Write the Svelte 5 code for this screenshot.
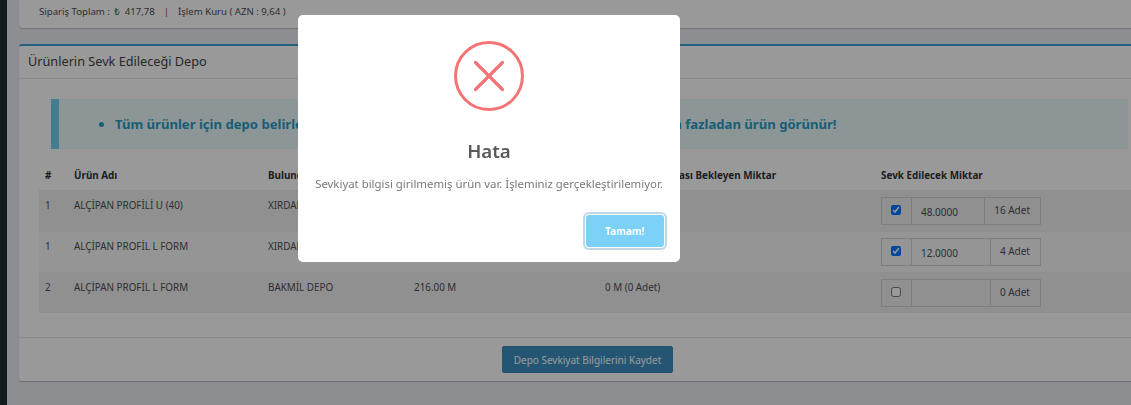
<script>
  const rows = [
    { no: 1, name: 'ALÇİPAN PROFİLİ U (40)', depot: 'XIRDALAN DEPO', stock: '', wait: '', on: true, val: '48.0000', unit: '16 Adet', wide: false },
    { no: 1, name: 'ALÇİPAN PROFİL L FORM', depot: 'XIRDALAN DEPO', stock: '', wait: '', on: true, val: '12.0000', unit: '4 Adet', wide: true },
    { no: 2, name: 'ALÇİPAN PROFİL L FORM', depot: 'BAKMİL DEPO', stock: '216.00 M', wait: '0 M (0 Adet)', on: false, val: '', unit: '0 Adet', wide: true }
  ];
</script>

<div class="page">
  <aside class="side"></aside>
  <main class="main">
    <section class="summary">
      <span>Sipariş Toplam : <span class="cur">₺</span> <span class="amt">417,78</span></span>
      <span class="sep">|</span>
      <span>İşlem Kuru ( AZN : 9,64 )</span>
    </section>

    <section class="card">
      <h2 class="card-title">Ürünlerin Sevk Edileceği Depo</h2>
      <div class="card-body">
        <div class="alert">
          <ul>
            <li>Tüm ürünler için depo belirleyiniz. Birden fazla depoda stok olması durumunda tabloda fazladan ürün görünür!</li>
          </ul>
        </div>
        <table>
          <colgroup>
            <col class="c1" /><col class="c2" /><col class="c3" /><col class="c4" /><col class="c5" /><col class="c6" />
          </colgroup>
          <thead>
            <tr>
              <th>#</th>
              <th>Ürün Adı</th>
              <th>Bulunduğu Depo</th>
              <th>Depo Miktarı</th>
              <th>Sevkiyat Onaması Bekleyen Miktar</th>
              <th>Sevk Edilecek Miktar</th>
            </tr>
          </thead>
          <tbody>
            {#each rows as r}
              <tr>
                <td>{r.no}</td>
                <td>{r.name}</td>
                <td>{r.depot}</td>
                <td>{r.stock}</td>
                <td>{r.wait}</td>
                <td class="qty">
                  <div class="group">
                    <span class="chk"><input type="checkbox" checked={r.on} /></span>
                    <input class="val" type="text" value={r.val} />
                    <span class="unit" class:long={!r.wide}>{r.unit}</span>
                  </div>
                </td>
              </tr>
            {/each}
          </tbody>
        </table>
      </div>
      <footer class="card-foot">
        <button class="save" type="button">Depo Sevkiyat Bilgilerini Kaydet</button>
      </footer>
    </section>
  </main>
</div>

<div class="overlay">
  <div class="modal" role="dialog">
    <svg class="icon" viewBox="0 0 70 70" width="70" height="70" aria-hidden="true">
      <circle cx="35" cy="35" r="33.5" fill="none" stroke="#f27474" stroke-width="3" />
      <path d="M21.5 21.5 L48.5 48.5 M48.5 21.5 L21.5 48.5" fill="none" stroke="#f27474" stroke-width="3.2" stroke-linecap="round" />
    </svg>
    <h3>Hata</h3>
    <p>Sevkiyat bilgisi girilmemiş ürün var. İşleminiz gerçekleştirilemiyor.</p>
    <div class="actions"><button type="button">Tamam!</button></div>
  </div>
</div>

<style>
  :global(body) {
    margin: 0;
    background: #ecedf4;
    font-family: "Noto Sans", "Liberation Sans", sans-serif;
    font-size: 10px;
    color: #4b5563;
    overflow: hidden;
  }
  .page { display: flex; height: 405px; width: 1131px; overflow: hidden; }
  .side { flex: 0 0 7px; background: #1b2f35; }
  .main { flex: 0 0 1149px; padding-left: 12px; box-sizing: border-box; }
  .summary {
    height: 28px;
    box-sizing: border-box;
    padding: 5px 20px 0;
    background: #fff;
    border-radius: 0 0 4px 4px;
    box-shadow: 0 1px 1px rgba(0,0,0,.2);
    color: #4a4f5a;
    font-size: 9.6px;
    display: flex;
    gap: 9px;
  }
  .cur { margin-left: 2px; }
  .amt { margin-left: 2.4px; }
  .sep { color: #b03a48; }
  .card {
    margin-top: 16px;
    background: #fff;
    border-top: 2px solid #3b9fd3;
    border-radius: 3px;
    box-shadow: 0 1px 1px rgba(0,0,0,.25);
  }
  .card-title {
    margin: 0;
    padding: 0 9px;
    height: 32px;
    line-height: 30px;
    font-size: 12.7px;
    font-weight: 400;
    color: #444;
    border-bottom: 1px solid #e6e6e6;
  }
  .card-body { padding: 20px 0 24px 20px; border-bottom: 1px solid #e6e6e6; }
  .alert {
    margin: 0 28px 0 12px;
    height: 50px;
    background: #eafafa;
    border-left: 8px solid #6fd0ee;
    color: #2a9cc6;
    font-size: 13.1px;
    font-weight: 700;
    display: flex;
    align-items: center;
  }
  .alert ul { margin: 0; padding-left: 56px; }
  table { width: 100%; border-collapse: collapse; table-layout: fixed; }
  .c1 { width: 29px; } .c2 { width: 194px; } .c3 { width: 146px; }
  .c4 { width: 191px; } .c5 { width: 276px; }
  th {
    height: 41px;
    box-sizing: border-box;
    padding: 0 6px 10px;
    vertical-align: bottom;
    text-align: left;
    font-size: 9.9px;
    line-height: 10px;
    font-weight: 700;
    color: #333;
    white-space: nowrap;
    overflow: visible;
  }
  td {
    height: 41px;
    padding: 7px 6px 0;
    vertical-align: top;
    box-sizing: border-box;
    font-size: 9.85px;
    color: #4a4f5a;
    border-top: 1px solid #eee;
    white-space: nowrap;
  }
  tbody tr:nth-child(odd) td { background: #f0f0f0; }
  tbody tr:nth-child(even) td { background: #f9f9f9; }
  td.qty { padding-top: 6px; }
  .group { display: flex; width: 160px; height: 28px; box-sizing: border-box; border: 1px solid #ced4da; }
  .chk { flex: 0 0 30px; display: flex; align-items: center; justify-content: center; border-right: 1px solid #ced4da; padding: 0 1px 2px 0; box-sizing: border-box; }
  .chk input { margin: 0; width: 10px; height: 10px; }
  .val { flex: 1 1 auto; min-width: 0; width: 0; border: 0; padding: 2px 9px 0; font: inherit; font-size: 10px; color: #4a4f5a; background: transparent; }
  .unit { flex: 0 0 50px; box-sizing: border-box; display: flex; align-items: center; justify-content: flex-end; padding: 0 10px 2px 0; border-left: 1px solid #ced4da; font-size: 10px; }
  .unit.long { flex-basis: 56px; }
  .card-foot { display: flex; justify-content: center; padding: 8px 0; }
  .save {
    width: 171px; height: 27px; padding: 0;
    border: 1px solid #3a8cbc; border-radius: 2px;
    background: #3d8fc2;
    color: #fff; font: inherit; font-size: 10px;
  }
  .overlay {
    position: fixed; inset: 0;
    background: rgba(0,0,0,.4);
  }
  .modal {
    position: absolute; left: 298px; top: 15px;
    width: 382px; height: 247px;
    box-sizing: border-box;
    background: #fff; border-radius: 5px;
    display: flex; flex-direction: column; align-items: center;
    padding-top: 26px;
  }
  .icon { display: block; }
  h3 { margin: 26px 0 0; font-size: 18.7px; line-height: 28px; font-weight: 600; color: #595959; }
  p { margin: 14.5px 0 0; font-size: 11.4px; line-height: 8px; color: #797979; white-space: nowrap; }
  .actions { align-self: stretch; display: flex; justify-content: flex-end; margin-top: 27.5px; padding-right: 16px; }
  .actions button {
    width: 78px; height: 32px; padding: 0;
    background: #7cd1f9; color: #fff; border: 0; border-radius: 3px;
    box-shadow: 0 0 0 1px #fff, 0 0 0 3px rgba(43,114,165,.29);
    font: inherit; font-size: 10px; font-weight: 700;
  }
</style>
